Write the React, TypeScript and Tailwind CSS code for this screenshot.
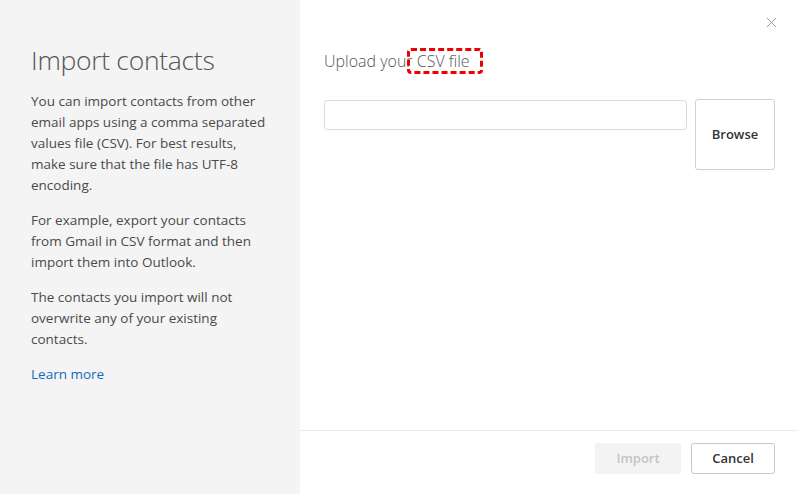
import { X } from "lucide-react";

function App() {
  return (
    <div className="flex w-[797px] h-[494px] bg-white font-['Open_Sans',sans-serif] overflow-hidden">
      <div className="w-[300px] shrink-0 bg-[#f4f4f4] px-[31px] pt-[40px] text-[#4a4a4a]">
        <h1 className="text-[26.5px] font-light leading-[40px] text-[#555] mb-[11px] tracking-[-0.3px]">Import contacts</h1>
        <p className="text-[13.5px] leading-[21px] mb-[14px]">
          You can import contacts from other email apps using a comma separated values file (CSV). For best results, make sure that the file has UTF-8 encoding.
        </p>
        <p className="text-[13.5px] leading-[21px] mb-[14px]">
          For example, export your contacts from Gmail in CSV format and then import them into Outlook.
        </p>
        <p className="text-[13.5px] leading-[21px] mb-[14px]">
          The contacts you import will not overwrite any of your existing contacts.
        </p>
        <a className="block text-[13.5px] leading-[21px] text-[#0f6cbd]">Learn more</a>
      </div>

      <div className="flex-1 flex flex-col">
        <div className="flex-1 relative px-[24px] pt-[48px]">
          <button className="absolute right-[19px] top-[14px] text-[#888]">
            <X size={17} strokeWidth={1.2} />
          </button>
          <div className="text-[16px] font-light text-[#555] leading-[26px]">
            Upload your{" "}
            <span className="relative">
              CSV file
              <span className="absolute left-[-10px] right-[-13px] top-[-2px] bottom-[-2px] border-[3px] border-dashed border-[#e00] rounded-[4px]"></span>
            </span>
          </div>
          <div className="flex gap-[8px] mt-[26px]">
            <div className="w-[363px] h-[30px] border border-[#dcdcdc] rounded-[3px]"></div>
            <button className="w-[80px] h-[71px] mt-[-1px] border border-[#d0d0d0] rounded-[3px] text-[13px] font-semibold text-[#333]">
              Browse
            </button>
          </div>
        </div>
        <div className="h-[64px] border-t border-[#eaeaea] flex items-start justify-end gap-[10px] pt-[12px] pr-[22px]">
          <button className="w-[86px] h-[31px] rounded-[3px] bg-[#f3f3f3] text-[13px] font-semibold text-[#c4c4c4]">Import</button>
          <button className="w-[84px] h-[31px] rounded-[3px] border border-[#c8c8c8] text-[13px] font-semibold text-[#333] mr-[2px]">Cancel</button>
        </div>
      </div>
    </div>
  );
}

export default App;
